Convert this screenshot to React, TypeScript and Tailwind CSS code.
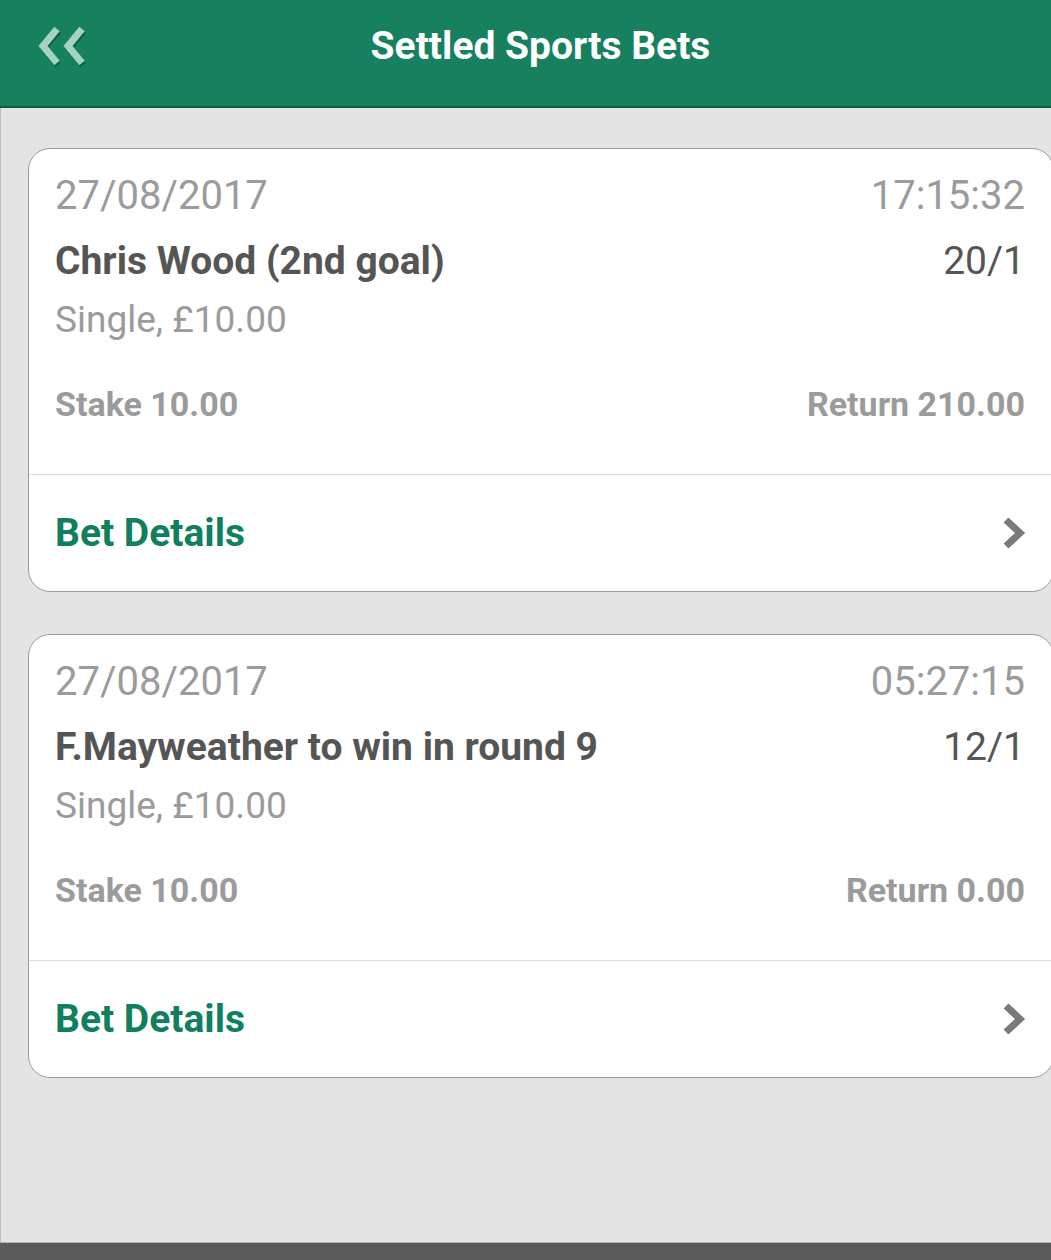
import { ReactNode } from "react";

type Bet = {
  date: string;
  time: string;
  selection: string;
  odds: string;
  stake: string;
  ret: string;
};

const bets: Bet[] = [
  {
    date: "27/08/2017",
    time: "17:15:32",
    selection: "Chris Wood (2nd goal)",
    odds: "20/1",
    stake: "10.00",
    ret: "210.00",
  },
  {
    date: "27/08/2017",
    time: "05:27:15",
    selection: "F.Mayweather to win in round 9",
    odds: "12/1",
    stake: "10.00",
    ret: "0.00",
  },
];

function Row({ children, className }: { children: ReactNode; className: string }) {
  return <div className={`flex items-center justify-between ${className}`}>{children}</div>;
}

function BetCard({ bet }: { bet: Bet }) {
  return (
    <div className="w-[1026px] shrink-0 rounded-[22px] border border-[#9a9a9a] bg-white">
      <div className="pl-[26px] pr-[28px] pt-[17px] pb-[46px]">
        <Row className="h-[60px] text-[40px] text-[#9b9b9b]">
          <span>{bet.date}</span>
          <span>{bet.time}</span>
        </Row>
        <Row className="h-[70px] text-[39px] text-[#555]">
          <span className="font-bold">{bet.selection}</span>
          <span>{bet.odds}</span>
        </Row>
        <Row className="h-[48px] text-[37px] text-[#9b9b9b]">
          <span>Single, £{bet.stake}</span>
        </Row>
        <Row className="mt-[36px] h-[48px] text-[34px] font-bold text-[#9b9b9b]">
          <span>Stake {bet.stake}</span>
          <span>Return {bet.ret}</span>
        </Row>
      </div>
      <div className="flex h-[117px] items-center justify-between border-t border-[#dcdcdc] pl-[26px] pr-[28px]">
        <span className="text-[39px] font-bold text-[#0f7f5d]">Bet Details</span>
        <svg width="26" height="34" viewBox="0 0 26 34" className="mr-[-2px]">
          <path d="M5 4 L19 17 L5 30" fill="none" stroke="#7a7a7a" strokeWidth="7" strokeLinejoin="miter" />
        </svg>
      </div>
    </div>
  );
}

export default function App() {
  return (
    <div className="flex h-[1260px] w-[1051px] flex-col overflow-hidden bg-[#e4e4e4] font-['Roboto',sans-serif]">
      <header className="relative flex h-[108px] shrink-0 items-center justify-center border-b-2 border-[#0c5c43] bg-[#16805f]">
        <svg width="56" height="50" viewBox="0 0 56 50" className="absolute left-[33px] top-[22px]">
          <g fill="none" strokeWidth="7" strokeLinecap="butt">
            <path d="M24 7 L10 24 L24 41" stroke="#0e5e45" transform="translate(1 2)" />
            <path d="M49 7 L35 24 L49 41" stroke="#0e5e45" transform="translate(1 2)" />
            <path d="M24 7 L10 24 L24 41" stroke="#a2d3c3" />
            <path d="M49 7 L35 24 L49 41" stroke="#a2d3c3" />
          </g>
        </svg>
        <h1 className="mb-[14px] ml-[30px] text-[39px] font-bold text-white">Settled Sports Bets</h1>
      </header>
      <main className="flex-1 border-l border-[#bdbdbd]">
        <div className="flex flex-col gap-[42px] pt-[40px] pl-[27px]">
          {bets.map((b) => (
            <BetCard key={b.time} bet={b} />
          ))}
        </div>
      </main>
      <div className="h-[18px] shrink-0 border-t border-[#b5b5b5] bg-[#5a5a5a]" />
    </div>
  );
}
